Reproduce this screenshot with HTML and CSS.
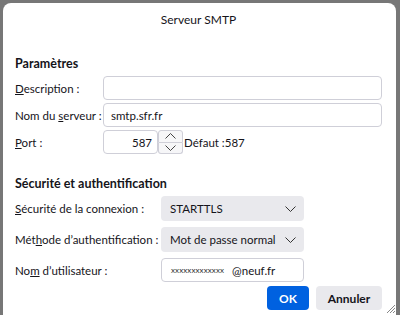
FILE: index.html
```html
<!DOCTYPE html>
<html>
<head>
    <title>Serveur SMTP</title>
    <link rel="stylesheet" href="styles.css">
</head>
<body>
    <div class="dialog">
        <div class="title">Serveur SMTP</div>

        <!-- Paramètres -->
        <div class="section-title">Paramètres</div>
        <div class="rows settings">
            <label class="label"><u>D</u>escription :</label>
            <div class="field"></div>

            <label class="label">Nom du <u>s</u>erveur :</label>
            <div class="field">smtp.sfr.fr</div>

            <label class="label"><u>P</u>ort :</label>
            <div class="port-line">
                <div class="field port">587</div>
                <div class="spinner">
                    <div class="spin up">
                        <svg width="11" height="6" viewBox="0 0 11 6"><path d="M0.5 5.5 L5.5 0.5 L10.5 5.5" fill="none" stroke="#444" stroke-width="1"/></svg>
                    </div>
                    <div class="spin down">
                        <svg width="11" height="6" viewBox="0 0 11 6"><path d="M0.5 0.5 L5.5 5.5 L10.5 0.5" fill="none" stroke="#444" stroke-width="1"/></svg>
                    </div>
                </div>
                <span class="default">Défaut :587</span>
            </div>
        </div>

        <!-- Sécurité -->
        <div class="section-title second">Sécurité et authentification</div>
        <div class="rows security">
            <label class="label"><u>S</u>écurité de la connexion :</label>
            <div class="select">
                <span>STARTTLS</span>
                <svg width="11" height="6" viewBox="0 0 11 6"><path d="M0.5 0.5 L5.5 5.5 L10.5 0.5" fill="none" stroke="#333" stroke-width="1"/></svg>
            </div>

            <label class="label">Mét<u>h</u>ode d’authentification :</label>
            <div class="select">
                <span>Mot de passe normal</span>
                <svg width="11" height="6" viewBox="0 0 11 6"><path d="M0.5 0.5 L5.5 5.5 L10.5 0.5" fill="none" stroke="#333" stroke-width="1"/></svg>
            </div>

            <label class="label">No<u>m</u> d’utilisateur :</label>
            <div class="field user">
                <span class="masked">xxxxxxxxxxxxx</span>
                <span class="domain">@neuf.fr</span>
            </div>
        </div>

        <div class="buttons">
            <button class="btn primary">OK</button>
            <button class="btn">Annuler</button>
        </div>

        <svg class="grip" width="8" height="8" viewBox="0 0 8 8">
            <path d="M8 0 L0 8 M8 3 L3 8 M8 6 L6 8" stroke="#888" stroke-width="1"/>
        </svg>
    </div>
</body>
</html>
```

FILE: styles.css
```css
html, body {
    margin: 0;
    height: 100%;
}

body {
    background: #777777;
    padding: 3px 4px 0 3px;
    box-sizing: border-box;
    font-family: 'Lato', sans-serif;
    font-size: 11.5px;
    color: #15141a;
    overflow: hidden;
}

.dialog {
    position: relative;
    background: #FFFFFF;
    border-radius: 8px 8px 0 0;
    height: 100%;
    padding: 0 14px 0 12px;
    box-sizing: border-box;
}

.title {
    text-align: center;
    font-size: 12px;
    padding-top: 9px;
    height: 33px;
    line-height: 16px;
}

.section-title {
    font-weight: bold;
    font-size: 12.5px;
    line-height: 16px;
    margin-top: 11px;
}

.section-title.second {
    margin-top: 22px;
}

.rows {
    display: grid;
    align-items: center;
    row-gap: 3px;
    margin-top: 4px;
}

.settings {
    grid-template-columns: 88px 1fr;
}

.security {
    grid-template-columns: 146px 143px;
    row-gap: 6px;
}

.label {
    white-space: nowrap;
}

.field {
    height: 24px;
    border: 1px solid #cfcfd8;
    border-radius: 4px;
    box-sizing: border-box;
    padding: 0 7px;
    display: flex;
    align-items: center;
    white-space: nowrap;
}

.port-line {
    display: flex;
    align-items: center;
}

.port {
    width: 55px;
    justify-content: flex-end;
    padding-right: 5px;
}

.spinner {
    width: 25px;
    height: 24px;
    display: flex;
    flex-direction: column;
}

.spin {
    flex: 1;
    border: 1px solid #cfcfd8;
    display: flex;
    align-items: center;
    justify-content: center;
    background: #f6f6f8;
}

.spin.up {
    border-radius: 3px 3px 0 0;
}

.spin.down {
    border-top: none;
    border-radius: 0 0 3px 3px;
}

.default {
    margin-left: 1px;
}

.select {
    height: 25px;
    background: #e9e9ed;
    border-radius: 4px;
    display: flex;
    align-items: center;
    justify-content: space-between;
    padding: 0 8px 0 9px;
    white-space: nowrap;
}

.user {
    padding-left: 9px;
}

.masked {
    font-size: 8px;
    letter-spacing: 0.1px;
    color: #333;
}

.domain {
    margin-left: 8px;
}

.buttons {
    display: flex;
    justify-content: flex-end;
    gap: 7px;
    margin-top: 4px;
}

.btn {
    font-family: 'Lato', sans-serif;
    font-size: 12px;
    height: 24px;
    border: none;
    border-radius: 4px;
    background: #e9e9ed;
    color: #15141a;
    width: 66px;
    padding: 0;
    font-weight: bold;
}

.btn.primary {
    background: #0061e0;
    color: #FFFFFF;
    width: 42px;
}

.grip {
    position: absolute;
    right: 1px;
    bottom: 2px;
}
```
